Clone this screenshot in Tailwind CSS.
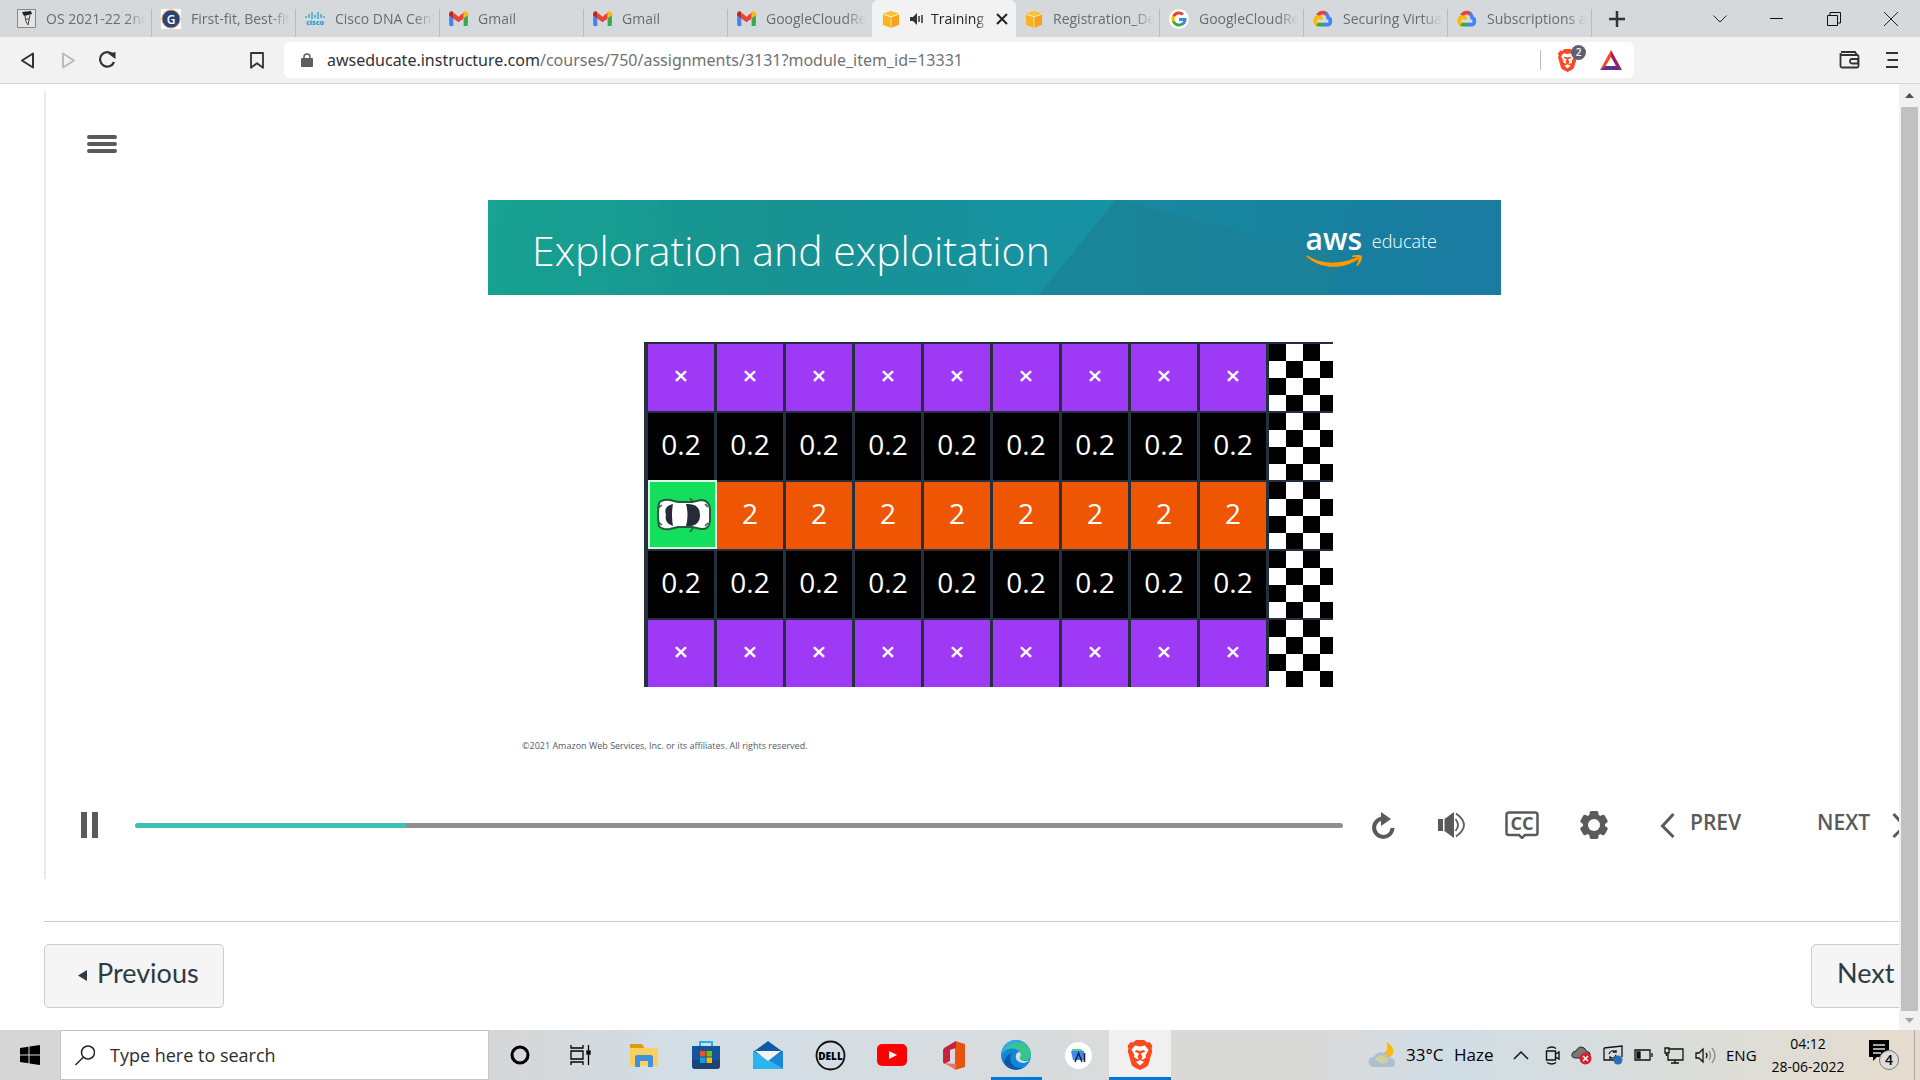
<!DOCTYPE html>
<html lang="en">
<head>
<meta charset="utf-8">
<title>Training</title>
<script src="https://cdn.jsdelivr.net/npm/@tailwindcss/browser@4"></script>
</head>
<body class="h-screen overflow-hidden bg-white font-['Open_Sans',sans-serif] text-[#333]">
<svg class="hidden">
  <symbol id="gmail" viewBox="0 0 20 16"><path fill="#4285f4" d="M0 3v11.500Q0 16 1.500 16H4.500V6z"/><path fill="#34a853" d="M15.500 6V16H18.500Q20 16 20 14.500V3z"/><path fill="#ea4335" d="M4.500 1.500 10 6l5.500-4.500V8L10 12 4.500 8z"/><path fill="#c5221f" d="M0 3C0 .5 2.500-.6 4.500 1.300V8L0 4.600z"/><path fill="#fbbc04" d="M20 3c0-2.500-2.500-3.600-4.500-1.700V8L20 4.600z"/></symbol>
  <symbol id="cube" viewBox="0 0 20 20"><path fill="#fbc02b" d="M1 4 10 1l9 3-9 3z"/><path fill="#f8b224" d="M1 5l9 3v12l-9-3.500z"/><path fill="#f5a31b" d="M19 5l-9 3v12l9-3.500z"/><path stroke="#fde5a5" fill="none" d="M1 4.500l9 3 9-3M10 7.500V20"/></symbol>
  <symbol id="gcloud" viewBox="0 0 20 18"><path fill="none" stroke="#ea4335" stroke-width="4" d="M4.500 6A6 6 0 0 1 14 4.500"/><path fill="none" stroke="#4285f4" stroke-width="4" d="M13 3.800a6 6 0 0 1 2.500 4.500c3.500 1.500 3 7.200-1 7.200H10"/><path fill="none" stroke="#34a853" stroke-width="4" d="M10.500 15.500H6q-1.500 0-2.800-1"/><path fill="none" stroke="#fbbc04" stroke-width="4" d="M3.800 15A4 4 0 0 1 5 7.600q2.500-.2 4 2.200"/></symbol>
  <symbol id="brave" viewBox="0 0 26 30"><path fill="#fb4a22" d="M6 2.500 9 0h8l3 2.500 2.500-.5L25.500 6l-1 2.500.8 2.500-4 14-2.500 2.200L13 30l-5.800-2.800L4.700 25 .7 11l.8-2.500L.5 6l3-4z"/><path fill="#fff" d="M8 5.500l5 1 5-1 3.500 4.500-3 5.500.5 2-4 2.500-.5-1.500 1-1-1.500-4 4.500-2-2-1.500-3.500 1-3.500-1-2 1.500 4.500 2L10.500 17l1 1-.5 1.500-4-2.500.5-2-3-5.500zM13 20l4 2-4 3.500L9 22z"/></symbol>
</svg>

<div class="flex h-full flex-col">
  <!-- Tab strip -->
  <header>
    <div class="flex h-[37px] bg-[#d5d9dc] pl-2">
      <nav id="tabs" class="flex text-[14px] text-[#686c70]"></nav>
      <button aria-label="New tab" class="flex w-[50px] items-center justify-center"><svg width="16" height="16" stroke="#333" stroke-width="2.500"><path d="M8 0v16M0 8h16"/></svg></button>
      <div class="ml-auto flex">
        <button aria-label="Search tabs" class="flex w-[57px] items-center justify-center"><svg width="14" height="8" fill="none" stroke="#222"><path d="M.5.500 7 7l6.500-6.500"/></svg></button>
        <button aria-label="Minimize" class="flex w-[57px] items-center justify-center"><svg width="13" height="2"><path fill="#111" d="M0 0h13v1H0z"/></svg></button>
        <button aria-label="Restore" class="flex w-[57px] items-center justify-center"><svg width="14" height="14" fill="none" stroke="#111"><path d="M.5 3.500h10v10H.500zM3 3V.500h10.500V11H11"/></svg></button>
        <button aria-label="Close" class="flex w-[58px] items-center justify-center"><svg width="14" height="14" stroke="#222"><path d="M0 0l14 14M14 0 0 14"/></svg></button>
      </div>
    </div>
    <!-- Address bar -->
    <div class="flex h-[47px] items-center border-b border-[#d5d5d6] bg-[#f2f2f2] px-5">
      <button aria-label="Back" class="mr-[26px]"><svg width="15" height="17" fill="none" stroke="#333" stroke-width="2" stroke-linejoin="round"><path d="M13 1.500v14L2 8.500z"/></svg></button>
      <button aria-label="Forward" class="mr-[22px]"><svg width="15" height="17" fill="none" stroke="#bbb" stroke-width="2" stroke-linejoin="round"><path d="M2 1.500v14l11-7z"/></svg></button>
      <button aria-label="Reload" class="mr-[134px]"><svg width="18" height="18" fill="none" stroke="#333" stroke-width="2.200"><path d="M15 4a7.200 7.200 0 1 0 1 7"/><path fill="#333" stroke="none" d="M10 2.500 17.500 1v7z"/></svg></button>
      <button aria-label="Bookmark" class="mr-5"><svg width="14" height="17" fill="none" stroke="#333" stroke-width="1.800" stroke-linejoin="round"><path d="M1 1h12v14.800l-6-4.600-6 4.600z"/></svg></button>
      <div class="flex h-9 max-w-[1350px] flex-1 items-center rounded-md bg-white pl-[17px] pr-3">
        <svg class="shrink-0" width="12" height="15"><rect y="5" width="12" height="9" rx="1" fill="#5c5e62"/><path d="M3 6V4a3 3 0 0 1 6 0v2" fill="none" stroke="#5c5e62" stroke-width="1.500"/></svg>
        <a href="#" aria-label="Page address" class="ml-3.5 flex-1 whitespace-nowrap font-['Noto_Sans',sans-serif] text-[16px] leading-6 text-[#707274]"><span class="text-[#303234]">awseducate.instructure.com</span>/courses/750/assignments/3131?module_item_id=13331</a>
        <span class="h-5 w-px bg-[#bbb]"></span>
        <button aria-label="Brave Shields" class="relative ml-4 mr-[22px]"><svg width="21" height="23"><use href="#brave"/></svg><span class="absolute -top-1 left-3.5 flex h-[15px] w-[15px] items-center justify-center rounded-full bg-[#5e6175] text-[10px] font-semibold text-white">2</span></button>
        <button aria-label="Rewards"><svg width="22" height="20"><path fill="#ff4724" d="M11 0v7L5 17l-5 3z"/><path fill="#9e1f63" d="M11 0l11 20-5.500-3L11 7z"/><path fill="#662d91" d="M0 20l5.500-4h11L22 20z"/></svg></button>
      </div>
      <button aria-label="Wallet" class="ml-auto mr-[26px]"><svg width="21" height="18" fill="none" stroke="#333" stroke-width="1.800"><path d="M2 1h14l2 3M1.500 4H18q1.500 0 1.500 1.500V15q0 1.500-1.500 1.500H3.500Q1.500 16.500 1.500 15V2M19 8h-6q-2 0-2 2.300t2 2.200h6z"/></svg></button>
      <button aria-label="Menu" class="mr-0.5"><svg width="12" height="16" stroke="#333" stroke-width="1.800"><path d="M0 1h12M1.500 8H12M0 15h12"/></svg></button>
    </div>
  </header>

  <!-- Page -->
  <div class="flex min-h-0 flex-1">
    <main class="min-w-0 flex-1 overflow-hidden pl-11">
      <section class="mt-[7px] w-[calc(100%+44px)] border-l-2 border-[#e9eaea] pb-10 pt-11 text-[#5a5a5a]">
        <button aria-label="Open menu" class="ml-[41px] flex w-[30px] flex-col gap-[3px]"><span class="h-1 w-full rounded-xs bg-[#5a5a5a]"></span><span class="h-1 w-full rounded-xs bg-[#5a5a5a]"></span><span class="h-1 w-full rounded-xs bg-[#5a5a5a]"></span></button>
        <div class="mx-auto mt-[47px] w-[1013px]">
          <div class="relative flex h-[95px] items-center justify-between pl-11 pr-16 text-white">
            <svg class="absolute inset-0 h-full w-full" viewBox="0 0 1013 95" preserveAspectRatio="none"><defs><linearGradient id="g"><stop offset="0" stop-color="#17a090"/><stop offset=".3" stop-color="#189292"/><stop offset=".6" stop-color="#1692a5"/><stop offset="1" stop-color="#187ba3"/></linearGradient></defs><path fill="url(#g)" d="M0 0h1013v95H0z"/><path fill="#19a596" fill-opacity=".5" d="M0 0h26L0 32z"/><path fill="#19a596" fill-opacity=".2" d="M0 0h172L117 95H0z"/><path fill="#1b7f98" fill-opacity=".45" d="M628 0 551 95h462V0z"/><path fill="#1b7f92" fill-opacity=".5" d="M628 0 551 95h290l10-38z"/><path fill="#187aa3" fill-opacity=".4" d="M866 0h147v95H841l10-38z"/></svg>
            <h1 class="relative pt-1 text-[41px] font-light leading-[54px]">Exploration and exploitation</h1>
            <div class="relative flex items-start gap-2.5 pb-1">
              <div class="flex w-14 flex-col items-center"><span class="text-[30px] font-semibold leading-8">aws</span><svg width="56" height="14"><path fill="#f90" d="M0 1q1-1 2 0c15 9 32 8 47 2 3-1 4 1 2 2C34 16 12 13 0 1z"/><path fill="#f90" d="M46 1c4-2 9-1 10 0 0 4-2 8-5 10-1 0-1 0 0-2q2-4 1-6-2-1-6-1z"/></svg></div>
              <span class="pt-1 text-[18px] font-light leading-7">educate</span>
            </div>
          </div>
          <table id="track" class="ml-[156px] mt-[47px] w-[689px] table-fixed border-separate border-spacing-0 border-l-4 border-[#25303f] text-center text-[28px] leading-8 text-white"></table>
          <p class="ml-[34px] mt-[53px] text-[9px] leading-3 text-[#525b68]">©2021 Amazon Web Services, Inc. or its affiliates. All rights reserved.</p>
        </div>
        <div class="mt-[59px] flex h-7 items-center pl-[35px] text-[21px] font-semibold leading-7">
          <button aria-label="Pause" class="mr-[37px] flex gap-[5px]"><span class="h-[26px] w-1.5 bg-[#5a5a5a]"></span><span class="h-[26px] w-1.5 bg-[#5a5a5a]"></span></button>
          <input id="seek" aria-label="Seek" type="range" min="0" max="100" value="22" class="h-[5px] min-w-0 flex-1 appearance-none rounded-full [&::-webkit-slider-thumb]:h-0 [&::-webkit-slider-thumb]:w-0 [&::-webkit-slider-thumb]:appearance-none">
          <button aria-label="Replay" class="ml-7"><svg width="24" height="28"><path fill="none" stroke="#5a5a5a" stroke-width="4" d="M12 7.500a9.200 9.200 0 1 0 9.500 9.500"/><path fill="#5a5a5a" d="M10 1l10 7-10 7z"/></svg></button>
          <button aria-label="Volume" class="ml-[43px]"><svg width="29" height="26"><path fill="#5a5a5a" d="M0 7h5v12H0zM6.500 7 16 0v26l-9.500-7z"/><path fill="none" stroke="#5a5a5a" stroke-width="1.800" d="M17.500 7q5 6 0 12M18 1.500q16 11.500 0 23"/></svg></button>
          <button aria-label="Captions" class="relative ml-[38px]"><svg width="34" height="28"><path fill="none" stroke="#5a5a5a" stroke-width="2.500" d="M4 1.500h26q2.500 0 2.500 2.500v18q0 2-2.500 2H20l-3 3-3-3H4q-2.500 0-2.500-2V4q0-2.500 2.500-2.500z"/></svg><span class="absolute inset-0 text-center text-[18px] font-bold leading-[25px]">CC</span></button>
          <button aria-label="Settings" class="ml-[41px]"><svg width="28" height="28" viewBox="-14 -14 28 28"><g fill="#5a5a5a"><circle r="11"/><rect x="-4.500" y="-14" width="9" height="28" rx="2"/><rect x="-4.500" y="-14" width="9" height="28" rx="2" transform="rotate(60)"/><rect x="-4.500" y="-14" width="9" height="28" rx="2" transform="rotate(120)"/></g><circle r="6" fill="#fff"/></svg></button>
          <button class="ml-[52px] flex w-[93px] items-center gap-[15px]"><svg width="15" height="26" fill="none" stroke="#5a5a5a" stroke-width="3"><path d="M13.500 2 2.500 14l11 11"/></svg><span class="pb-1.5">PREV</span></button>
          <button class="mr-[36px] ml-16 flex w-[90px] items-center justify-between"><span class="pb-1.5">NEXT</span><svg width="15" height="26" fill="none" stroke="#5a5a5a" stroke-width="3"><path d="M1.500 2l11 12-11 11"/></svg></button>
        </div>
      </section>
      <footer class="mt-[42px] flex w-[calc(100%+44px)] justify-between border-t border-[#c7cdd1] pt-[22px] font-['Lato',sans-serif] text-[27px] text-[#2d3b45]">
        <a href="#" class="flex h-16 w-[180px] items-center gap-2.5 rounded-[5px] border border-[#c7cdd1] bg-[#f5f5f5] pl-[33px] pb-1.5"><svg class="mt-1" width="9" height="11"><path fill="#2d3b45" d="M9 0v11L0 5.500z"/></svg>Previous</a>
        <a href="#" class="flex h-16 w-[132px] items-center rounded-[5px] border border-[#c7cdd1] bg-[#f5f5f5] pl-[25px] pb-1.5">Next</a>
      </footer>
    </main>
    <div class="flex w-[21px] flex-col items-center bg-[#f1f1f1]" aria-hidden="true">
      <svg class="my-[9px] h-[5px] w-[9px] shrink-0"><path fill="#505050" d="M4.500 0 9 5H0z"/></svg>
      <span class="w-[17px] flex-1 bg-[#c1c1c1]"></span>
      <svg class="my-[7px] h-[5px] w-[9px] shrink-0"><path fill="#a3a3a3" d="M4.500 5 9 0H0z"/></svg>
    </div>
  </div>

  <!-- Taskbar -->
  <footer class="flex h-[50px] shrink-0 items-stretch bg-linear-to-r from-[#d6d6d6] via-[#dadada] to-[#d8d8d6] text-black">
    <button aria-label="Start" class="flex w-[60px] items-center justify-center"><svg width="20" height="20"><path d="M0 3l8.500-1.300V9.500H0zM9.500 1.500 20 0v9.500H9.500zM0 10.500h8.500v7.800L0 17zM9.500 10.500H20V20L9.500 18.500z"/></svg></button>
    <label class="flex w-[429px] items-center gap-[15px] border border-[#c6c6c6] bg-white pl-3.5"><svg width="20" height="21" fill="none" stroke="#222" stroke-width="1.500"><circle cx="13" cy="7.500" r="6.500"/><path d="M8.500 12 .5 20"/></svg><input type="text" aria-label="Search" placeholder="Type here to search" class="w-72 text-[18px] leading-6 placeholder:text-[#2c2c2c] outline-none"></label>
    <nav class="flex bg-linear-to-r from-[#d6d6d6] via-[#d2dee6] via-30% to-[#dadada] *:flex *:w-[62px] *:items-center *:justify-center">
      <button aria-label="Cortana"><svg width="20" height="20"><circle cx="10" cy="10" r="8" fill="none" stroke="#000" stroke-width="3"/></svg></button>
      <button aria-label="Task view" class="pr-1"><svg width="21" height="20" fill="none" stroke="#000" stroke-width="1.300"><path d="M1 0v3h12V0M1 20v-3h12v3M1 6h12v8H1zM18.500 0v5M18.500 10v10"/><path fill="#000" d="M17 6h3v3h-3z"/></svg></button>
      <button aria-label="File Explorer"><svg width="28" height="24"><path fill="#d89e0d" d="M0 1h12l2 3v4H0z"/><path fill="#fbd05f" d="M0 5h28v18H0z"/><path fill="#3e92dd" d="M5 24V14q0-2 2-2h14q2 0 2 2v10h-5v-6h-8v6z"/></svg></button>
      <button aria-label="Store"><svg width="30" height="30"><path fill="none" stroke="#21b2ea" stroke-width="2" d="M9 7V2h12v5"/><path fill="#15559b" d="M1 6h28v20q0 3-3 3H4q-3 0-3-3z"/><path fill="#24375f" d="M1 20h28v6q0 3-3 3H4q-3 0-3-3z" fill-opacity=".6"/><path fill="#f25022" d="M9 11h5.500v5.500H9z"/><path fill="#7fba00" d="M15.500 11H21v5.500h-5.500z"/><path fill="#00a4ef" d="M9 17.500h5.500V23H9z"/><path fill="#ffb900" d="M15.500 17.500H21V23h-5.500z"/></svg></button>
      <button aria-label="Mail"><svg width="30" height="30"><path fill="#0f5ba8" d="M0 12 15 1l15 11-15 9z"/><path fill="#2bb5f0" d="M0 11l30 18H0z"/><path fill="#1a86d8" d="M30 11v18L15 20z"/><path fill="#f3f3f3" d="M2 11h26L15 21z"/></svg></button>
      <button aria-label="Dell"><svg width="31" height="31"><circle cx="15.500" cy="15.500" r="14" fill="none" stroke="#111" stroke-width="1.800"/><text x="15.500" y="19.500" text-anchor="middle" font-family="Open Sans" font-weight="800" font-size="10">DELL</text></svg></button>
      <button aria-label="YouTube"><svg width="30" height="22"><rect width="30" height="22" rx="5" fill="#f00"/><path fill="#fff" d="M12 7l8 4-8 4z"/></svg></button>
      <button aria-label="Office"><svg width="24" height="29"><path fill="#e8530f" d="M13 0l10 3v23l-10 3z"/><path fill="#c6213d" d="M2 7 14 0v7l-6 2v11l-6 3-1-2V9z"/><path fill="#f06a72" d="M2 22l12 1v6z"/></svg></button>
      <button aria-label="Edge" class="relative"><svg width="30" height="30"><circle cx="15" cy="15" r="15" fill="#1286d8"/><path fill="#39c48e" d="M3 6C10-3 30-1 30 15c0 7-11 6-12 3 5-8-8-14-17-5z"/><path fill="#30aee0" d="M2 8C8-3 20 0 22 3 12 1 3 8 0 16q0-5 2-8z"/><path fill="#0c59a4" d="M11 13c-5 7 1 16 10 15-5 3-15 2-18-6q1-6 8-9z"/><path fill="#d8dfe3" d="M18 12c5 3-2 6 2 8 3 2 8 1 9-1-4 7-16 4-14-4q1-3 3-3z"/></svg><span class="absolute bottom-0 left-1.5 h-[3px] w-[51px] bg-[#0078d7]"></span></button>
      <button aria-label="Android Studio"><svg width="27" height="27"><circle cx="13.500" cy="13.500" r="13.500" fill="#fff"/><path fill="#3ddc84" d="M7 7h9l2 2v3H7z"/><path fill="#4285f4" d="M6 9h13v9H8z"/><path fill="none" stroke="#123" stroke-width="1.500" d="M10 20l3.500-9 3.500 9M19.500 11v9"/></svg></button>
      <button aria-label="Brave" class="border-b-3 border-[#0078d7] bg-[#f0f0f0] pt-0.5"><svg width="26" height="30"><use href="#brave"/></svg></button>
    </nav>
    <div class="ml-auto flex items-center bg-linear-to-r from-[#dadada] via-[#d0dde5] via-20% to-[#e5dccd] pl-10">
      <svg width="28" height="26"><path fill="#fdb813" d="M18 0c9 3 10 14 2 16-4 0-6-3-5-5 5-2 5-6 3-11z"/><path fill="#a9bfd2" d="M5 25a5 5 0 0 1 1-10q3-6 10-4 4 1 5 5 6 0 6 5 0 4-4 4z"/><path fill="#d3cf9d" d="M7 17q7-8 14 1-6 8-14-1z"/></svg>
      <span class="ml-2.5 w-12 text-[17px] leading-6">33°C</span><span class="w-[59px] text-[17px] leading-6">Haze</span>
      <button aria-label="Show hidden icons" class="mr-4"><svg width="16" height="10" fill="none" stroke="#111" stroke-width="1.500"><path d="M1 9l7-7 7 7"/></svg></button>
      <div class="flex items-center gap-[11px]">
        <svg width="15" height="19" fill="none" stroke="#111" stroke-width="1.400"><path d="M1.500 5h9v9h-9zM10.500 8 14 6v7l-3.500-2M2 2.500q5-3 9 0M2 16.500q5 3 9 0"/></svg>
        <svg width="21" height="20"><path fill="#777" stroke="#222" d="M5 13q-5 0-4-4 1-3 4-3 3-6 8-3 2 1 2 3 5 1 4 4t-4 3z"/><circle cx="14.500" cy="13.500" r="6" fill="#dc1f2e"/><path stroke="#fff" stroke-width="1.500" d="M12 11l5 5M17 11l-5 5"/></svg>
        <svg width="20" height="20" fill="none" stroke="#111" stroke-width="1.300"><path d="M1 3 19 1v11M1 3v12h10M6 9q2-5 7-2V5M13 7h-3M13 10q-2 5-6 2v2"/><circle cx="15" cy="15" r="4.500" fill="#2a6fbd" stroke="none"/></svg>
        <svg width="19" height="12" fill="none" stroke="#111" stroke-width="1.300"><path d="M1 1h15v10H1zM18 4v4"/><path fill="#111" d="M3 3h3v6H3z"/></svg>
        <svg width="20" height="17" fill="none" stroke="#111" stroke-width="1.300"><path d="M5 2h14v11H4V7M11 13v3M7 16h8M1 1h4v5H1zM2.500 6v3"/></svg>
        <svg width="21" height="17" fill="none" stroke="#111" stroke-width="1.300"><path d="M1 6h3l4-4v13l-4-4H1zM11 6q2 2.500 0 5"/><path stroke="#888" d="M14 4q3 4.500 0 9M17 1q6 7.500 0 15"/></svg>
      </div>
      <span class="ml-2.5 w-[34px] text-[15px] leading-5">ENG</span>
      <time class="ml-2 w-20 text-center text-[14px] leading-[23px]">04:12<br>28-06-2022</time>
      <button aria-label="Notifications" class="relative ml-[21px] mr-3.5"><svg width="31" height="32"><path d="M0 1h20v17H8l-4 4v-4H0z"/><path stroke="#ddd" stroke-width="1.500" d="M4 6h12M4 10h12M4 14h8"/><circle cx="20" cy="21" r="9.500" fill="#ddd" stroke="#777"/></svg><span class="absolute left-[10px] top-[11px] w-5 text-center text-[14px] font-semibold leading-5">4</span></button>
      <span class="mr-[5px] h-full w-px bg-[#aaa]"></span>
    </div>
  </footer>
</div>
<script>
const gmail = '<svg width="19" height="15"><use href="#gmail"/></svg>';
const cube = '<svg width="18" height="18"><use href="#cube"/></svg>';
const gcloud = '<svg width="20" height="17"><use href="#gcloud"/></svg>';
const tabs = [
  ['OS 2021-22 2nd', '<svg width="19" height="19"><path fill="#e5e5e5" stroke="#888" d="M.5.500h18v18H.500z"/><path fill="#222" d="M5 3l9-1 1 3-4 1-4 1z"/><path fill="none" stroke="#444" d="M8 7q0 5 3 9M13 6l-2 10M9 10h3"/></svg>'],
  ['First-fit, Best-fit', '<svg width="20" height="20"><path fill="#fff" d="M0 0h20v20H0z"/><circle cx="10" cy="10" r="9" fill="#27457c" stroke="#d98b3d"/><text x="10" y="14.500" text-anchor="middle" font-size="12" font-weight="600" fill="#fff">G</text></svg>'],
  ['Cisco DNA Center', '<svg width="20" height="13"><path stroke="#1ba7d8" stroke-width="1.300" d="M1 4v2M4 2v4M7 0v7M10 3v3M13 0v7M16 2v4M19 4v2"/><text x="10" y="13" text-anchor="middle" font-size="7" font-weight="800" fill="#1ba7d8">cisco</text></svg>'],
  ['Gmail', gmail], ['Gmail', gmail], ['GoogleCloudReady', gmail], ['Training', cube], ['Registration_Details', cube],
  ['GoogleCloudReady', '<svg width="20" height="20" fill="none" stroke-width="3"><circle cx="10" cy="10" r="10" fill="#fff"/><path stroke="#ea4335" d="M4.500 7.500A6 6 0 0 1 14 5.500"/><path stroke="#fbbc04" d="M4.800 7a6 6 0 0 0 0 6"/><path stroke="#34a853" d="M4.500 12.500A6 6 0 0 0 14 14.500"/><path stroke="#4285f4" d="M10 10.500h6q0 3-2.500 4.500"/></svg>'],
  ['Securing Virtual', gcloud], ['Subscriptions and', gcloud]];
const fade = 'min-w-0 flex-1 overflow-hidden whitespace-nowrap [mask-image:linear-gradient(to_right,black_80%,transparent)]';
document.getElementById('tabs').innerHTML = tabs.map(([name, icon], i) => i === 6
  ? `<div class="flex w-36 items-center rounded-t-md bg-[#f2f2f2] pl-[10px] pr-2 text-[#222]"><a href="#" class="flex min-w-0 flex-1 items-center">${icon}<svg class="ml-2.5 mr-2 shrink-0" width="13" height="12"><path fill="#333" d="M0 4h3l4-4v12L3 8H0z"/><path stroke="#333" stroke-width="1.500" fill="none" d="M9 3v6M12 2v8"/></svg><span class="${fade}">${name}</span></a><button aria-label="Close tab" class="ml-2"><svg width="12" height="12" stroke="#222" stroke-width="2"><path d="M1 1l10 10M11 1 1 11"/></svg></button></div>`
  : `<a href="#" class="relative flex w-36 items-center gap-2.5 pl-[9px] pr-1.5">${icon}<span class="${fade}">${name}</span>${i === 5 ? '' : '<span class="absolute right-0 bottom-0 h-7 w-px bg-[#b8bcbf]"></span>'}</a>`).join('');

const seek = document.getElementById('seek');
seek.style.background = `linear-gradient(to right,#3bc0b3 ${seek.value}.4%,#8e8f8f ${seek.value}.4%)`;

const kinds = [
  ['bg-[#9e3af5] text-[26px] font-semibold', '×'], ['bg-black', '0.2'], ['bg-[#ee5604] font-medium', '2'], ['bg-black', '0.2'], ['bg-[#9e3af5] text-[26px] font-semibold', '×']];
const car = '<svg class="mx-auto" width="56" height="34"><path d="M4 5Q7 1 15 2l8 2h14l9-2q8 0 9 9v12q-1 9-9 8l-9-2H23l-8 2q-8 1-11-3-2-12 0-23z" fill="#fff" stroke="#25593c" stroke-width="2"/><path fill="#252b3b" d="M18 6Q8 8 11 17q-2 8 7 11-2-11 0-22zM31 6q3 11 0 22 14 1 14-11T31 6z"/><path stroke="#25593c" stroke-width="1.500" d="M35 0l3 4M35 34l3-4M3 10l4-3M3 24l4 3M50 6l3 3M50 28l3-3"/></svg>';
document.getElementById('track').innerHTML = kinds.map(([bg, t], r) => '<tr>' + Array.from({length: 9}, (_, c) =>
  r === 2 && c === 0
    ? `<td class="h-[69px] w-[69px] border-2 border-[#d9f7e4] bg-[#13df5d] p-0">${car}</td>`
    : `<td class="h-[69px] w-[69px] border-t-2 border-r-3 border-[#25303f] px-0 pt-0 pb-1.5 ${bg}">${t}</td>`).join('')
  + '<td class="h-[69px] border-t-2 border-[#25303f] bg-[conic-gradient(#fff_25%,#000_0_50%,#fff_0_75%,#000_0)] bg-size-[34px_34px] p-0"></td></tr>').join('');
</script>
</body>
</html>
